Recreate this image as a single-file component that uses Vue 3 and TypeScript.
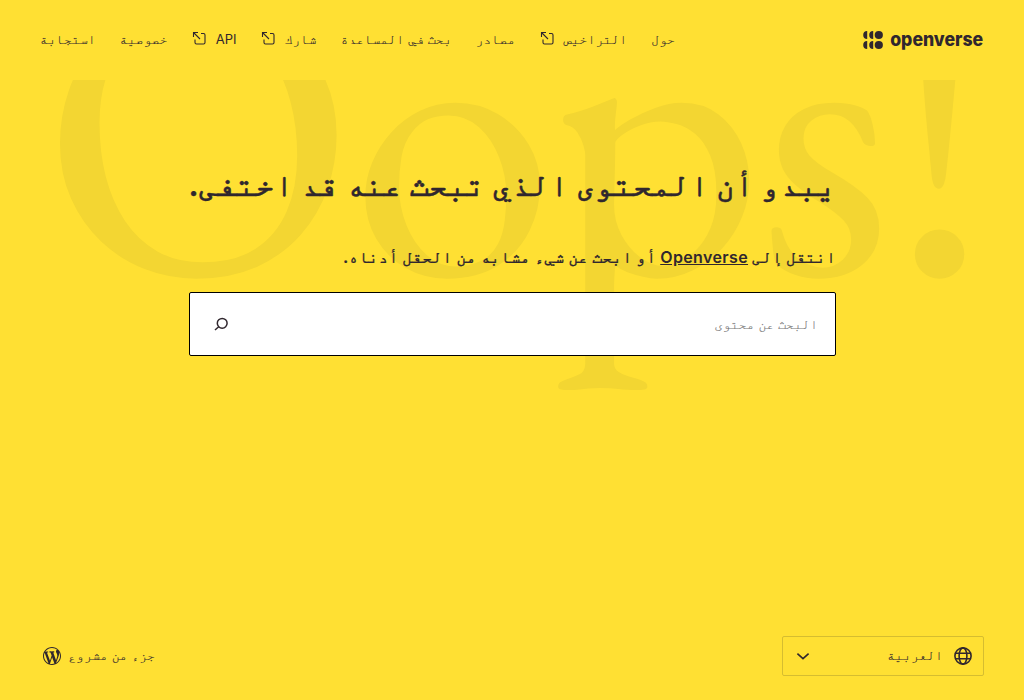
<script setup lang="ts">
interface NavLink {
  label: string
  external: boolean
}

const links: NavLink[] = [
  { label: 'حول', external: false },
  { label: 'التراخيص', external: true },
  { label: 'مصادر', external: false },
  { label: 'بحث في المساعدة', external: false },
  { label: 'شارك', external: true },
  { label: 'API', external: true },
  { label: 'خصوصية', external: false },
  { label: 'استجابة', external: false },
]
</script>

<template>
  <div class="page" dir="rtl" lang="ar">
    <svg class="oops" viewBox="0 80 1024 320" aria-hidden="true" direction="ltr">
      <text x="41.5" y="273">Oops!</text>
    </svg>

    <header class="header">
      <a class="logo" aria-label="openverse">
        <svg width="121" height="20" viewBox="0 0 121 20" direction="ltr">
          <path d="M4.2 1v8a4 4 0 0 1 0-8zM10.2 1v8a4 4 0 0 1 0-8zM4.2 11v8a4 4 0 0 1 0-8zM10.2 11v8a4 4 0 0 1 0-8z" />
          <circle cx="15.8" cy="5" r="4.1" />
          <circle cx="15.8" cy="15" r="4.1" />
          <text x="27.2" y="15.6" textLength="93" lengthAdjust="spacingAndGlyphs">openverse</text>
        </svg>
      </a>
      <nav class="nav">
        <a v-for="link in links" :key="link.label" class="nav-link">
          <span :class="{ latin: link.label === 'API' }">{{ link.label }}</span>
          <svg v-if="link.external" class="external" width="16" height="16" viewBox="0 0 16 16">
            <path d="M1.5 6V1.5H6M1.5 1.5 8 8M9 2.5h2.5A1.5 1.5 0 0 1 13 4v7.5a1.5 1.5 0 0 1-1.5 1.5H4.5A1.5 1.5 0 0 1 3 11.5v-3" />
          </svg>
        </a>
      </nav>
    </header>

    <main class="main">
      <h1 class="title">يبدو أن المحتوى الذي تبحث عنه قد اختفى.</h1>
      <p class="hint">انتقل إلى <a class="home">Openverse</a> أو ابحث عن شيء مشابه من الحقل أدناه.</p>
      <form class="search" @submit.prevent>
        <input class="field" type="search" placeholder="البحث عن محتوى" />
        <button class="submit" type="submit" aria-label="بحث">
          <svg width="24" height="24" viewBox="0 0 24 24">
            <circle cx="13.2" cy="11.3" r="4.9" />
            <path d="M9.7 14.8 6 18" />
          </svg>
        </button>
      </form>
    </main>

    <footer class="footer">
      <div class="language">
        <svg class="globe" width="24" height="24" viewBox="0 0 24 24">
          <circle cx="12" cy="12" r="8.1" />
          <ellipse cx="12" cy="12" rx="3.9" ry="8.1" />
          <path d="M4.5 9.3h15M4.5 14.7h15" />
        </svg>
        <span class="language-name">العربية</span>
        <svg class="chevron" width="24" height="24" viewBox="0 0 24 24">
          <path d="m6.4 9.7 5.6 5 5.6-5" />
        </svg>
      </div>
      <div class="project">
        <span class="project-name">جزء من مشروع</span>
        <svg class="wordpress" width="18" height="18" viewBox="0 0 20 20">
          <path d="M20 10c0-5.51-4.49-10-10-10C4.48 0 0 4.49 0 10c0 5.52 4.48 10 10 10 5.51 0 10-4.48 10-10zM7.78 15.37L4.37 6.22c.55-.02 1.17-.08 1.17-.08.5-.06.44-1.13-.06-1.11 0 0-1.45.11-2.37.11-.18 0-.37 0-.58-.01C4.12 2.69 6.87 1.11 10 1.11c2.33 0 4.45.87 6.05 2.34-.68-.11-1.65.39-1.65 1.58 0 .74.45 1.36.9 2.1.35.61.55 1.36.55 2.46 0 1.49-1.4 5-1.4 5l-3.03-8.37c.54-.02.82-.17.82-.17.5-.05.44-1.25-.06-1.22 0 0-1.44.12-2.38.12-.87 0-2.33-.12-2.33-.12-.5-.03-.56 1.2-.06 1.22l.92.08 1.26 3.41zM17.41 10c.24-.64.74-1.87.43-4.25.7 1.29 1.05 2.71 1.05 4.25 0 3.29-1.73 6.24-4.4 7.78.97-2.59 1.94-5.2 2.92-7.78zM6.1 18.09C3.12 16.65 1.11 13.53 1.11 10c0-1.3.23-2.48.72-3.59C3.25 10.3 4.67 14.2 6.1 18.09zm4.03-6.63l2.58 6.98c-.86.29-1.76.45-2.71.45-.79 0-1.57-.11-2.29-.33.81-2.38 1.62-4.74 2.42-7.1z" />
        </svg>
      </div>
    </footer>
  </div>
</template>

<style scoped>
.page {
  position: relative;
  display: flex;
  flex-direction: column;
  height: 700px;
  overflow: hidden;
  background: #ffe033;
  color: #30272e;
  font-family: Inter, FreeMono, "DejaVu Sans Mono", monospace;
  font-size: 13.3px;
  line-height: 17px;
}
.oops {
  position: absolute;
  top: 80px;
  left: 0;
  width: 1024px;
  height: 320px;
  font-family: "EB Garamond", "Liberation Serif", serif;
  font-size: 411px;
  letter-spacing: -4.1px;
  fill: #f3d632;
}
.header {
  display: flex;
  justify-content: space-between;
  align-items: center;
  height: 80px;
  padding: 0 40px;
  box-sizing: border-box;
}
.logo svg {
  display: block;
  fill: #30272e;
  font-size: 18.6px;
  font-weight: 850;
  font-variation-settings: "opsz" 32;
}
.nav {
  display: flex;
  gap: 24px;
  padding-bottom: 2px;
  -webkit-text-stroke: 0.15px #30272e;
}
.nav-link {
  display: flex;
  align-items: center;
  gap: 8px;
  white-space: nowrap;
}
.latin {
  font-size: 13px;
  -webkit-text-stroke: 0;
}
svg.external, .submit svg, .globe, .chevron {
  fill: none;
  stroke: #30272e;
}
.external {
  margin-bottom: 1px;
  stroke-width: 1.1;
}
.main {
  position: relative;
  width: 647px;
  margin: 0 auto;
  padding: 83px 0 0 1px;
  flex: 1;
}
.title {
  margin: 0;
  font-size: 31.7px;
  line-height: 44px;
  font-weight: 600;
  text-indent: -1px;
  word-spacing: -1px;
  white-space: nowrap;
  -webkit-text-stroke: 0.4px #30272e;
}
.hint {
  margin: 36px 0 0;
  font-size: 16.67px;
  line-height: 28px;
  font-weight: 600;
  word-spacing: -0.2px;
  white-space: nowrap;
  -webkit-text-stroke: 0.2px #30272e;
}
.home {
  font-size: 16px;
  letter-spacing: 0.38px;
  text-decoration: underline;
  -webkit-text-stroke: 0;
}
.search {
  display: flex;
  align-items: center;
  height: 64px;
  margin-top: 21px;
  box-sizing: border-box;
  border: 1px solid #000;
  border-radius: 2px;
  background: #fff;
}
.field {
  flex: 1;
  min-width: 0;
  padding: 0 17px;
  border: 0;
  outline: 0;
  background: transparent;
  font: inherit;
  color: #30272e;
}
.field::placeholder {
  color: #757575;
  opacity: 1;
  -webkit-text-stroke: 0.15px #757575;
}
.submit {
  display: grid;
  place-items: center;
  width: 62px;
  height: 62px;
  padding: 0;
  border: 0;
  background: transparent;
}
.submit svg {
  stroke-width: 1.5;
}
.footer {
  display: flex;
  justify-content: space-between;
  align-items: center;
  padding: 0 40px 24px;
}
.language {
  display: flex;
  align-items: center;
  width: 202px;
  height: 40px;
  padding: 0 8px;
  box-sizing: border-box;
  border: 1px solid #d6bd30;
  border-radius: 2px;
}
.globe, .chevron {
  stroke-width: 1.6;
}
.language-name {
  flex: 1;
  padding: 0 8px 2px 0;
  -webkit-text-stroke: 0.15px #30272e;
}
.project {
  display: flex;
  align-items: center;
  gap: 7px;
  padding-left: 3px;
}
.project-name {
  padding-bottom: 2px;
  -webkit-text-stroke: 0.15px #30272e;
}
.wordpress {
  fill: #30272e;
}
</style>

<style>
body {
  margin: 0;
  background: #ffe033;
}
</style>
